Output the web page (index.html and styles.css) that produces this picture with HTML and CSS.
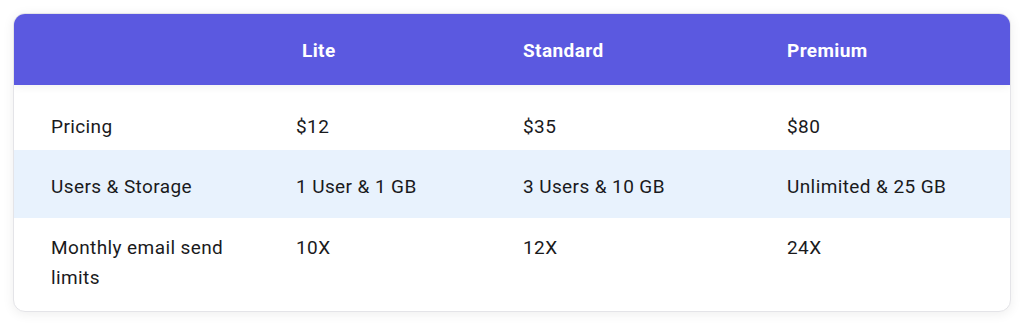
FILE: index.html
```html
<!DOCTYPE html>
<html lang="en">
<head>
<meta charset="utf-8">
<title>Plans</title>
<link rel="stylesheet" href="styles.css">
</head>
<body>
<div class="card">
  <div class="row head">
    <div class="cell"></div>
    <div class="cell lite">Lite</div>
    <div class="cell">Standard</div>
    <div class="cell">Premium</div>
  </div>
  <div class="row r1">
    <div class="cell">Pricing</div>
    <div class="cell">$12</div>
    <div class="cell">$35</div>
    <div class="cell">$80</div>
  </div>
  <div class="row r2 alt">
    <div class="cell">Users &amp; Storage</div>
    <div class="cell">1 User &amp; 1 GB</div>
    <div class="cell">3 Users &amp; 10 GB</div>
    <div class="cell">Unlimited &amp; 25 GB</div>
  </div>
  <div class="row r3">
    <div class="cell label">Monthly email send limits</div>
    <div class="cell">10X</div>
    <div class="cell">12X</div>
    <div class="cell">24X</div>
  </div>
</div>
</body>
</html>
```

FILE: styles.css
```css
html, body {
  margin: 0;
  padding: 0;
  background: #ffffff;
}
body {
  padding: 13px;
  font-family: Roboto, "Liberation Sans", sans-serif;
  font-size: 19px;
  letter-spacing: 0.4px;
  line-height: 30px;
  color: #1a1a1c;
}
.card {
  width: 998px;
  box-sizing: border-box;
  height: 299px;
  border: 1px solid #e4e4e8;
  border-radius: 12px;
  overflow: hidden;
  box-shadow: 0 2px 12px rgba(0, 0, 0, 0.07);
  background: #ffffff;
  display: flex;
  flex-direction: column;
}
.row {
  display: grid;
  grid-template-columns: 245px 227px 264px 1fr;
  padding: 0 0 0 37px;
}
.head {
  background: #5b59e0;
  color: #ffffff;
  font-weight: 700;
  height: 71px;
  align-items: center;
  box-shadow: 0 2px 8px rgba(0, 0, 0, 0.06);
  position: relative;
  z-index: 1;
  margin-top: -1px;
  padding-top: 1px;
}
.head .lite {
  padding-left: 6px;
}
.head .cell {
  padding-top: 2px;
}
.r1 {
  height: 65px;
  box-sizing: border-box;
  padding-top: 27px;
}
.r2 {
  height: 68px;
  box-sizing: border-box;
  padding-top: 22px;
}
.alt {
  background: #e8f2fd;
}
.r3 {
  flex: 1;
  padding-top: 15px;
}
.label {
  padding-right: 40px;
}
```
